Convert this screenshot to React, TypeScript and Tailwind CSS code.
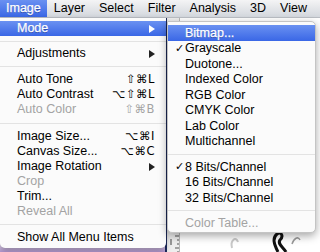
import clsx from 'clsx'

const MENUBAR = ['Image', 'Layer', 'Select', 'Filter', 'Analysis', '3D', 'View']

const BLUE = 'bg-[linear-gradient(#6a91f1,#3a67e6)] text-white [text-shadow:0_1px_0_rgba(0,0,40,0.35)] [-webkit-text-stroke:0.25px_white]'

function Arrow({ white }: { white?: boolean }) {
  return (
    <svg width="6" height="8" viewBox="0 0 6 8" className="ml-1" aria-hidden="true">
      <path d="M0 0L6 4L0 8Z" fill={white ? '#fff' : '#222'} />
    </svg>
  )
}

function Sep({ className }: { className: string }) {
  return (
    <div className={clsx('flex items-center', className)}>
      <div className="h-px w-full bg-[#e3e3e3]" />
    </div>
  )
}

type RowProps = {
  label: string
  shortcut?: string
  disabled?: boolean
  arrow?: boolean
  active?: boolean
}

function MainRow({ label, shortcut, disabled, arrow, active }: RowProps) {
  return (
    <div
      className={clsx(
        'flex h-[15px] items-center pl-[17px] pr-[11px] leading-none',
        active ? BLUE : disabled ? 'text-[#a3a3a3]' : 'text-black'
      )}
    >
      <span className="flex-1 whitespace-nowrap">{label}</span>
      {shortcut && (
        <span className="font-['DejaVu_Sans',sans-serif] text-[11.5px] tracking-[0.5px]">{shortcut}</span>
      )}
      {arrow && <Arrow white={active} />}
    </div>
  )
}

function SubRow({ label, checked, disabled, active }: RowProps & { checked?: boolean }) {
  return (
    <div
      className={clsx(
        'flex h-[15.5px] items-center pl-[7px] leading-none',
        active ? BLUE : disabled ? 'text-[#a3a3a3]' : 'text-black'
      )}
    >
      <span className="w-[10px] font-['DejaVu_Sans',sans-serif] text-[11px]">{checked ? '✓' : ''}</span>
      <span className="whitespace-nowrap">{label}</span>
    </div>
  )
}

function MenuBar() {
  return (
    <div className="flex h-[18px] items-center border-b border-[#b9bdc3] bg-[linear-gradient(#f4f4f5,#d3d7dd)] text-black">
      {MENUBAR.map((m, i) => (
        <div
          key={m}
          className={clsx(
            'flex h-full items-center leading-none',
            i === 0 ? clsx('px-[6px]', BLUE) : 'px-[7px]'
          )}
        >
          {m}
        </div>
      ))}
    </div>
  )
}

function MainMenu() {
  return (
    <div className="absolute left-0 top-[18px] w-[166px] rounded-b-[5px] bg-[#fbfbfb] pb-[3px] pt-[3px] shadow-[0_3px_6px_rgba(0,0,0,0.3)]">
      <MainRow label="Mode" arrow active />
      <Sep className="h-[10px]" />
      <MainRow label="Adjustments" arrow />
      <Sep className="h-[11px]" />
      <MainRow label="Auto Tone" shortcut="⇧⌘L" />
      <MainRow label="Auto Contrast" shortcut="⌥⇧⌘L" />
      <MainRow label="Auto Color" shortcut="⇧⌘B" disabled />
      <Sep className="h-[12px]" />
      <MainRow label="Image Size..." shortcut="⌥⌘I" />
      <MainRow label="Canvas Size..." shortcut="⌥⌘C" />
      <MainRow label="Image Rotation" arrow />
      <MainRow label="Crop" disabled />
      <MainRow label="Trim..." />
      <MainRow label="Reveal All" disabled />
      <Sep className="h-[11px]" />
      <MainRow label="Show All Menu Items" />
    </div>
  )
}

function SubMenu() {
  return (
    <div className="absolute left-[167px] top-[21px] w-[149px] rounded-[5px] rounded-tl-none border border-[#c4c4c4] bg-[#fbfbfb] pb-[1px] pt-[3px] shadow-[0_3px_8px_rgba(0,0,0,0.35)]">
      <SubRow label="Bitmap..." active />
      <SubRow label="Grayscale" checked />
      <SubRow label="Duotone..." />
      <SubRow label="Indexed Color" />
      <SubRow label="RGB Color" />
      <SubRow label="CMYK Color" />
      <SubRow label="Lab Color" />
      <SubRow label="Multichannel" />
      <Sep className="h-[10px]" />
      <SubRow label="8 Bits/Channel" checked />
      <SubRow label="16 Bits/Channel" />
      <SubRow label="32 Bits/Channel" />
      <Sep className="h-[10px]" />
      <SubRow label="Color Table..." disabled />
    </div>
  )
}

export default function App() {
  return (
    <div className="relative h-[252px] w-[320px] overflow-hidden bg-white font-['Liberation_Sans',Arial,sans-serif] text-[12.5px]">
      <MenuBar />
      <div className="flex h-[234px]">
        <div className="flex w-[165px] flex-col justify-end">
          <div className="h-[8px] bg-[linear-gradient(#e6dcef,#b497d2)]" />
        </div>
        <div className="w-[2px] bg-[#1d2b5e]" />
        <div className="w-[13px] border-r border-[#b8b8b8] bg-[#eeeeee]">
          <svg width="12" height="234" viewBox="0 0 12 234" aria-hidden="true">
            <path d="M8 218H12M10 222H12M10 226H12M8 230H12M10 234H12" stroke="#555" strokeWidth="1" />
            <path d="M4 221V227" stroke="#444" strokeWidth="1" />
          </svg>
        </div>
        <div className="flex-1 bg-white">
          <svg width="140" height="234" viewBox="0 0 140 234" aria-hidden="true">
            <path d="M52 230C50 222 56 218 58 224" stroke="#c9c9c9" strokeWidth="2" fill="none" />
            <path d="M98 234C94 226 92 220 97 216C101 213 104 218 100 222C97 226 104 230 106 234" stroke="#111" strokeWidth="3" fill="none" />
            <path d="M112 226C114 220 118 218 120 222" stroke="#9a9a9a" strokeWidth="1.5" fill="none" />
          </svg>
        </div>
      </div>
      <MainMenu />
      <SubMenu />
    </div>
  )
}
